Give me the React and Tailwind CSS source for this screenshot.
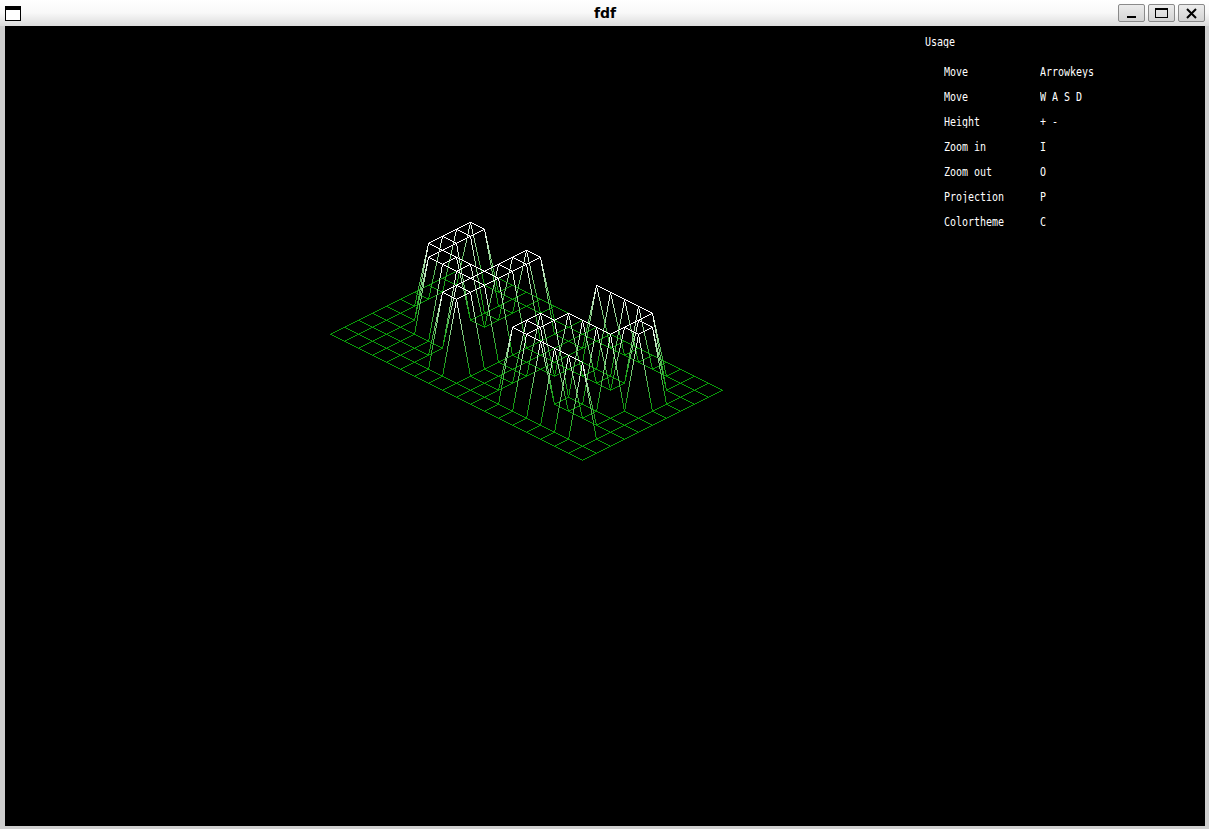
const MAP = [
  [0,0,0,0,0,0,0,0,0,0,0,0,0,0,0,0,0,0,0],
  [0,0,0,0,0,0,0,0,0,0,0,0,0,0,0,0,0,0,0],
  [0,0,10,10,0,0,10,10,0,0,0,10,10,10,10,10,0,0,0],
  [0,0,10,10,0,0,10,10,0,0,0,0,0,0,0,10,10,0,0],
  [0,0,10,10,0,0,10,10,0,0,0,0,0,0,0,10,10,0,0],
  [0,0,10,10,10,10,10,10,0,0,0,0,10,10,10,10,0,0,0],
  [0,0,0,10,10,10,10,10,0,0,0,10,10,0,0,0,0,0,0],
  [0,0,0,0,0,0,10,10,0,0,0,10,10,0,0,0,0,0,0],
  [0,0,0,0,0,0,10,10,0,0,0,10,10,10,10,10,10,0,0],
  [0,0,0,0,0,0,0,0,0,0,0,0,0,0,0,0,0,0,0],
  [0,0,0,0,0,0,0,0,0,0,0,0,0,0,0,0,0,0,0],
];

const OX = 470 - 5;
const OY = 264 - 26;
const project = (x, y) => ({
  px: OX + (x - y) * 14,
  py: OY + (x + y) * 7 - MAP[y][x] * 7,
  t: MAP[y][x] / 10,
});

const BANDS = 24;
function bandColor(b) {
  const t = Math.pow(b / BANDS, 1.25);
  const r = Math.round(10 + 245 * t);
  const g = Math.round(155 + 100 * t);
  const bl = Math.round(10 + 245 * t);
  return `rgb(${r},${g},${bl})`;
}

function buildPixels() {
  const pix = new Map();
  const line = (a, b) => {
    let x = a.px, y = a.py;
    const dx = Math.abs(b.px - a.px), dy = Math.abs(b.py - a.py);
    const sx = a.px < b.px ? 1 : -1, sy = a.py < b.py ? 1 : -1;
    const total = Math.max(dx, dy) || 1;
    let err = dx - dy, i = 0;
    for (;;) {
      const t = a.t + (b.t - a.t) * (i / total);
      pix.set(`${x},${y}`, Math.round(t * BANDS));
      if (x === b.px && y === b.py) break;
      const e2 = 2 * err;
      if (e2 > -dy) { err -= dy; x += sx; }
      if (e2 < dx) { err += dx; y += sy; }
      i++;
    }
  };
  for (let y = 0; y < MAP.length; y++) {
    for (let x = 0; x < MAP[0].length; x++) {
      if (x + 1 < MAP[0].length) line(project(x, y), project(x + 1, y));
      if (y + 1 < MAP.length) line(project(x, y), project(x, y + 1));
    }
  }
  const bands = {};
  for (const [k, b] of pix) {
    const [x, y] = k.split(',');
    (bands[b] = bands[b] || []).push(`M${x} ${y}h1v1h-1z`);
  }
  return Object.entries(bands).map(([b, d]) => ({ color: bandColor(+b), d: d.join('') }));
}

const PATHS = buildPixels();

const ROWS = [
  ['Move', 'Arrowkeys'],
  ['Move', 'W A S D'],
  ['Height', '+ -'],
  ['Zoom in', 'I'],
  ['Zoom out', 'O'],
  ['Projection', 'P'],
  ['Colortheme', 'C'],
];

function WinButton({ children }) {
  return (
    <div className="w-[27px] h-[18px] rounded-[2px] border border-[#8a8a8a] bg-gradient-to-b from-[#ececec] to-[#d4d4d4] flex items-center justify-center">
      <svg width="25" height="16" viewBox="0 0 25 16">{children}</svg>
    </div>
  );
}

function Label({ children, className = '' }) {
  return <span className={`inline-block scale-y-[1.2] tracking-[-0.02px] ${className}`}>{children}</span>;
}

export default function App() {
  return (
    <div className="w-[1209px] h-[829px] flex flex-col bg-[#cfcfcf] overflow-hidden">
      <div className="h-[26px] shrink-0 flex items-center pl-[5px] pr-[4px] bg-gradient-to-b from-white via-[#f8f8f8] to-[#dcdcdc]">
        <div className="flex-1 flex">
          <svg width="16" height="15" viewBox="0 0 16 15" className="shrink-0">
            <rect x="0" y="0" width="16" height="15" fill="#000" />
            <rect x="1" y="4" width="14" height="10" fill="#fff" />
          </svg>
        </div>
        <div className="text-center text-[14px] font-bold text-black font-['DejaVu_Sans',sans-serif]">fdf</div>
        <div className="flex-1 flex justify-end gap-[3px]">
          <WinButton>
            <rect x="8" y="11" width="9" height="2" fill="#000" />
          </WinButton>
          <WinButton>
            <rect x="6.5" y="3.5" width="12" height="9" fill="none" stroke="#000" />
            <rect x="6" y="3" width="13" height="2" fill="#000" />
          </WinButton>
          <WinButton>
            <path d="M8 4l9 9M17 4l-9 9" stroke="#000" strokeWidth="2" fill="none" />
          </WinButton>
        </div>
      </div>
      <div className="flex-1 flex pl-[5px] pr-[4px] pb-[3px]">
        <div className="flex-1 bg-black flex">
          <svg width="920" height="800" viewBox="0 0 920 800" shapeRendering="crispEdges" className="shrink-0">
            {PATHS.map((p) => (
              <path key={p.color} d={p.d} fill={p.color} />
            ))}
          </svg>
          <div className="text-white text-[10px] leading-[12px] font-['DejaVu_Sans_Mono',monospace] whitespace-pre pt-[10px]">
            <div className="h-[30px]"><Label>Usage</Label></div>
            <div className="pl-[19px] flex flex-col gap-[13px]">
              {ROWS.map(([a, b], i) => (
                <div key={i} className="flex h-[12px]">
                  <Label className="w-[96px]">{a}</Label>
                  <Label>{b}</Label>
                </div>
              ))}
            </div>
          </div>
        </div>
      </div>
    </div>
  );
}
